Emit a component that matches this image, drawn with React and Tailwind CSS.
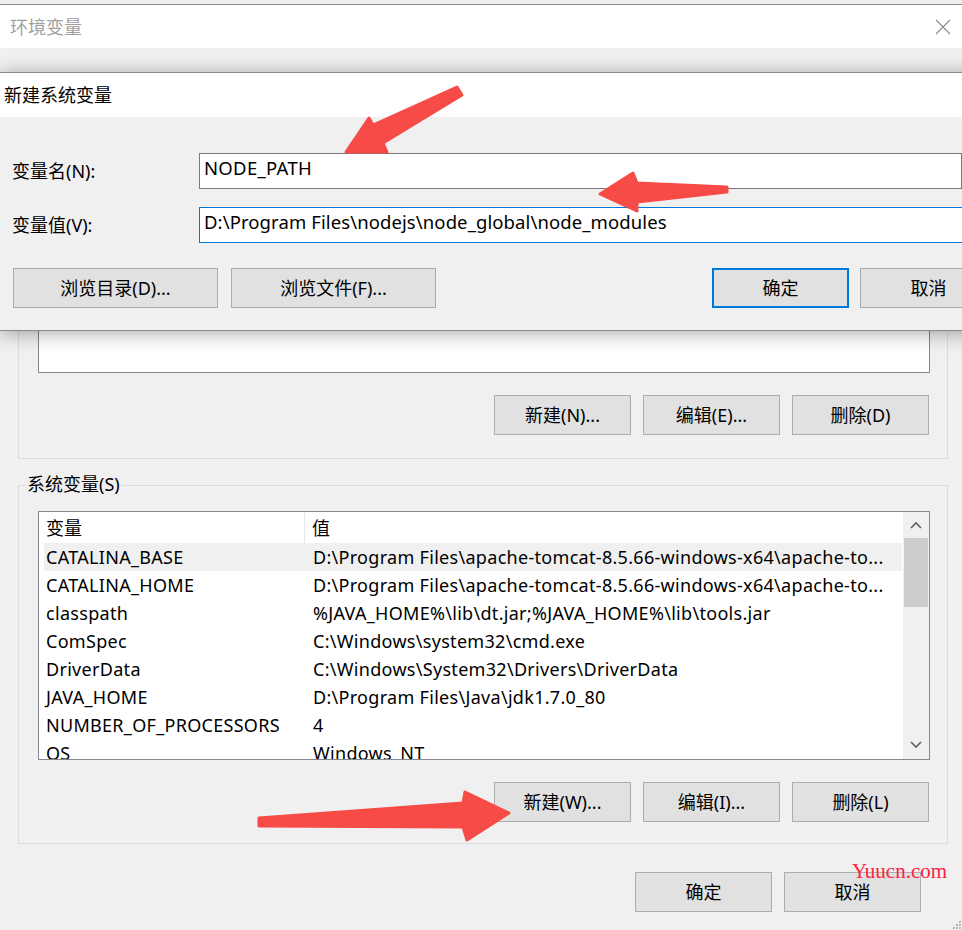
import React from 'react';

// 系统变量列表（按截图顺序）
const SYS_VARS = [
  ['CATALINA_BASE', 'D:\\Program Files\\apache-tomcat-8.5.66-windows-x64\\apache-to...'],
  ['CATALINA_HOME', 'D:\\Program Files\\apache-tomcat-8.5.66-windows-x64\\apache-to...'],
  ['classpath', '%JAVA_HOME%\\lib\\dt.jar;%JAVA_HOME%\\lib\\tools.jar'],
  ['ComSpec', 'C:\\Windows\\system32\\cmd.exe'],
  ['DriverData', 'C:\\Windows\\System32\\Drivers\\DriverData'],
  ['JAVA_HOME', 'D:\\Program Files\\Java\\jdk1.7.0_80'],
  ['NUMBER_OF_PROCESSORS', '4'],
  ['OS', 'Windows_NT'],
];

function Btn({ children, className = '', focused = false }) {
  const border = focused ? 'border-2 border-[#0078d7]' : 'border border-[#adadad]';
  return (
    <button className={`h-[40px] shrink-0 flex items-center justify-center bg-[#e1e1e1] ${border} text-[18px] leading-none text-black ${className}`}>
      {children}
    </button>
  );
}

function Chevron({ up }) {
  return (
    <svg width="12" height="8" viewBox="0 0 12 8">
      <polyline
        points={up ? '1,7 6,2 11,7' : '1,1 6,6 11,1'}
        fill="none"
        stroke="#606060"
        strokeWidth="1.6"
      />
    </svg>
  );
}

function Arrows() {
  return (
    <svg className="absolute inset-0 pointer-events-none" width="962" height="930" viewBox="0 0 962 930">
      <g fill="#f74b47" stroke="#f74b47" strokeWidth="3" strokeLinejoin="round">
        <polygon points="346,152 369,118 373,125 457,87 462,95 383,143 387,152" />
        <polygon points="600,194 633,173 637,183 727,187 727,192 637,202 637,211" />
        <polygon points="259,818 463,803 465,792 509,813 467,840 463,827 259,826" />
      </g>
    </svg>
  );
}

export default function App() {
  return (
    <div className="relative w-[962px] h-[930px] overflow-hidden bg-[#f0f0f0] text-black font-['Noto_Sans','Noto_Sans_CJK_SC',sans-serif]">
      <div className="h-[4px]" />

      {/* 环境变量 标题栏 */}
      <div className="h-[44px] border-t border-[#8c8c8c] bg-white flex items-center justify-between pl-[10px] pr-[11px]">
        <span className="text-[18px] leading-none text-[#a0a0a0]">环境变量</span>
        <svg width="16" height="16" viewBox="0 0 16 16">
          <path d="M1 1 L15 15 M15 1 L1 15" stroke="#8a8a8a" strokeWidth="1.1" />
        </svg>
      </div>

      {/* 用户变量（上半部分被新建对话框遮住） */}
      <div className="mt-[32px] ml-[18px] w-[930px] h-[379px] border border-[#dcdcdc] pt-[19px] pl-[19px]">
        <div className="w-[892px] h-[273px] border border-[#828790] bg-white" />
        <div className="w-[892px] mt-[22px] pr-[1px] flex justify-end gap-[12px]">
          <Btn className="w-[137px]">新建(N)...</Btn>
          <Btn className="w-[137px]">编辑(E)...</Btn>
          <Btn className="w-[137px]">删除(D)</Btn>
        </div>
      </div>

      {/* 系统变量 */}
      <div className="relative mt-[26px] ml-[18px] w-[930px] h-[359px] border border-[#dcdcdc] pt-[25px] pl-[19px]">
        <span className="absolute left-[7px] top-[-14px] px-[1px] bg-[#f0f0f0] text-[18px] leading-[24px]">系统变量(S)</span>
        <div className="w-[892px] h-[249px] border border-[#828790] bg-white flex overflow-hidden">
          <div className="flex-1 overflow-hidden">
            <div className="h-[31px] ml-[5px] flex items-center text-[18px] leading-none">
              <div className="w-[261px] h-full border-r border-[#e5e5e5] pl-[2px] flex items-center">变量</div>
              <div className="pl-[7px]">值</div>
            </div>
            {SYS_VARS.map(([name, value], i) => (
              <div
                key={name}
                className={`h-[28px] ml-[5px] mr-[1px] flex items-center text-[18px] leading-none tracking-[0.3px] whitespace-nowrap ${i === 0 ? 'bg-[#f0f0f0]' : ''}`}
              >
                <div className="w-[267px] pl-[2px]">{name}</div>
                <div className="pl-[2px]">{value}</div>
              </div>
            ))}
          </div>
          <div className="w-[26px] bg-[#f0f0f0] flex flex-col items-center">
            <div className="h-[26px] flex items-center justify-center">
              <Chevron up />
            </div>
            <div className="w-[24px] h-[69px] bg-[#cdcdcd]" />
            <div className="flex-1" />
            <div className="h-[26px] flex items-center justify-center mb-[1px]">
              <Chevron />
            </div>
          </div>
        </div>
        <div className="w-[892px] mt-[22px] pr-[1px] flex justify-end gap-[12px]">
          <Btn className="w-[137px]">新建(W)...</Btn>
          <Btn className="w-[137px]">编辑(I)...</Btn>
          <Btn className="w-[137px]">删除(L)</Btn>
        </div>
      </div>

      {/* 确定 / 取消 */}
      <div className="mt-[28px] pr-[41px] flex justify-end gap-[12px]">
        <Btn className="w-[137px]">确定</Btn>
        <Btn className="w-[137px]">取消</Btn>
      </div>

      {/* 新建系统变量 对话框（覆盖在上方） */}
      <div className="absolute left-0 top-[72px] w-[1000px] h-[259px] border-t border-b border-[#8a8a8a] bg-[#f0f0f0] shadow-[0_2px_18px_rgba(0,0,0,0.35)] flex flex-col">
        <div className="h-[44px] bg-white flex items-center pl-[4px] text-[18px] leading-none">新建系统变量</div>
        <div className="pt-[36px]">
          <div className="flex items-center">
            <div className="w-[187px] pl-[12px] text-[18px] leading-none">变量名(N):</div>
            <div className="w-[763px] h-[36px] ml-[12px] bg-white border border-[#7a7a7a] pl-[4px] pb-[5px] flex items-center text-[18.5px] leading-none tracking-[0.3px]">
              NODE_PATH
            </div>
          </div>
          <div className="flex items-center mt-[18px]">
            <div className="w-[187px] pl-[12px] text-[18px] leading-none">变量值(V):</div>
            <div className="w-[790px] h-[36px] ml-[12px] bg-white border border-[#0078d7] pl-[4px] pb-[5px] flex items-center text-[18.5px] leading-none tracking-[0.1px]">
              D:\Program Files\nodejs\node_global\node_modules
            </div>
          </div>
          <div className="flex mt-[25px] pl-[13px]">
            <Btn className="w-[205px]">浏览目录(D)...</Btn>
            <Btn className="w-[205px] ml-[13px]">浏览文件(F)...</Btn>
            <Btn className="w-[137px] ml-[276px]" focused>确定</Btn>
            <Btn className="w-[137px] ml-[11px]">取消</Btn>
          </div>
        </div>
      </div>

      <Arrows />

      {/* 水印 */}
      <span className="absolute left-[852px] top-[861px] text-[21px] leading-none text-[#ff2142] font-['Liberation_Serif',serif]">
        Yuucn.com
      </span>

      {/* 右下角缩放手柄 */}
      <svg className="absolute right-0 bottom-0" width="9" height="9" viewBox="0 0 9 9">
        <rect x="6" y="0" width="2" height="2" fill="#b8b8b8" />
        <rect x="3" y="3" width="2" height="2" fill="#b8b8b8" />
        <rect x="6" y="3" width="2" height="2" fill="#b8b8b8" />
        <rect x="0" y="6" width="2" height="2" fill="#b8b8b8" />
        <rect x="3" y="6" width="2" height="2" fill="#b8b8b8" />
        <rect x="6" y="6" width="2" height="2" fill="#b8b8b8" />
      </svg>
    </div>
  );
}
